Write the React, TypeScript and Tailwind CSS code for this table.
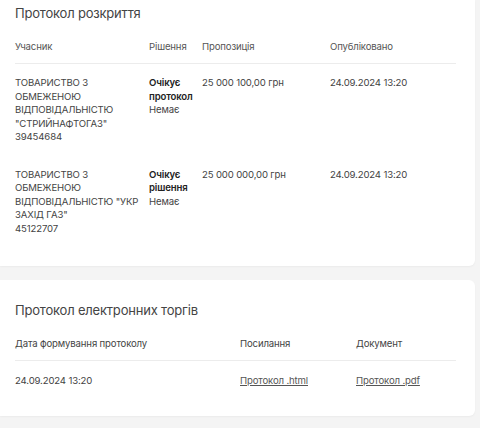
import React from "react";

const font = { fontFamily: "Inter, 'Noto Sans', sans-serif" };

export default function App() {
  const rows = [
    {
      name: 'ТОВАРИСТВО З ОБМЕЖЕНОЮ ВІДПОВІДАЛЬНІСТЮ "СТРИЙНАФТОГАЗ"',
      code: "39454684",
      status: ["Очікує", "протокол"],
      amount: "25 000 100,00 грн",
      date: "24.09.2024 13:20",
    },
    {
      name: 'ТОВАРИСТВО З ОБМЕЖЕНОЮ ВІДПОВІДАЛЬНІСТЮ "УКР ЗАХІД ГАЗ"',
      code: "45122707",
      status: ["Очікує", "рішення"],
      amount: "25 000 000,00 грн",
      date: "24.09.2024 13:20",
    },
  ];
  return (
    <div className="w-[480px] h-[428px] bg-[#f4f4f4] overflow-hidden text-[#3a3a3a] tracking-[-0.15px]" style={font}>
      <div className="w-[475px] bg-white rounded-br-md shadow-[0_1px_2px_rgba(0,0,0,0.04)] pt-[4px] pl-[15px] pr-[19px] pb-[19px]">
        <div className="text-[13px] leading-[18px] text-[#444] tracking-[-0.2px]">Протокол розкриття</div>
        <div className="mt-[18px] flex text-[9.6px] leading-[14px] text-[#555] pb-[9px] border-b border-[#ececec]">
          <div className="w-[134px]">Учасник</div>
          <div className="w-[53px]">Рішення</div>
          <div className="w-[128px]">Пропозиція</div>
          <div>Опубліковано</div>
        </div>
        {rows.map((r, i) => (
          <div key={i} className="flex text-[9.6px] leading-[13.5px] py-[12px]">
            <div className="w-[134px] pr-[6px] uppercase text-[#444]">
              <div>{r.name}</div>
              <div>{r.code}</div>
            </div>
            <div className="w-[53px]">
              <div className="font-semibold text-[#222]">{r.status[0]}</div>
              <div className="font-semibold text-[#222]">{r.status[1]}</div>
              <div className="text-[#444]">Немає</div>
            </div>
            <div className="w-[128px] text-[#444]">{r.amount}</div>
            <div className="text-[#444]">{r.date}</div>
          </div>
        ))}
      </div>
      <div className="mt-[14px] w-[475px] bg-white rounded-r-md shadow-[0_1px_2px_rgba(0,0,0,0.04)] pt-[20px] pl-[15px] pr-[19px] pb-[28px]">
        <div className="text-[13px] leading-[20px] text-[#444] tracking-[-0.2px]">Протокол електронних торгів</div>
        <div className="mt-[17px] flex text-[9.6px] leading-[14px] text-[#444] pb-[9px] border-b border-[#ececec]">
          <div className="w-[225px]">Дата формування протоколу</div>
          <div className="w-[116px]">Посилання</div>
          <div>Документ</div>
        </div>
        <div className="flex text-[9.6px] leading-[14px] text-[#444] pt-[13px]">
          <div className="w-[225px]">24.09.2024 13:20</div>
          <div className="w-[116px]">
            <a className="underline text-[#555]">Протокол .html</a>
          </div>
          <div>
            <a className="underline text-[#555]">Протокол .pdf</a>
          </div>
        </div>
      </div>
    </div>
  );
}
